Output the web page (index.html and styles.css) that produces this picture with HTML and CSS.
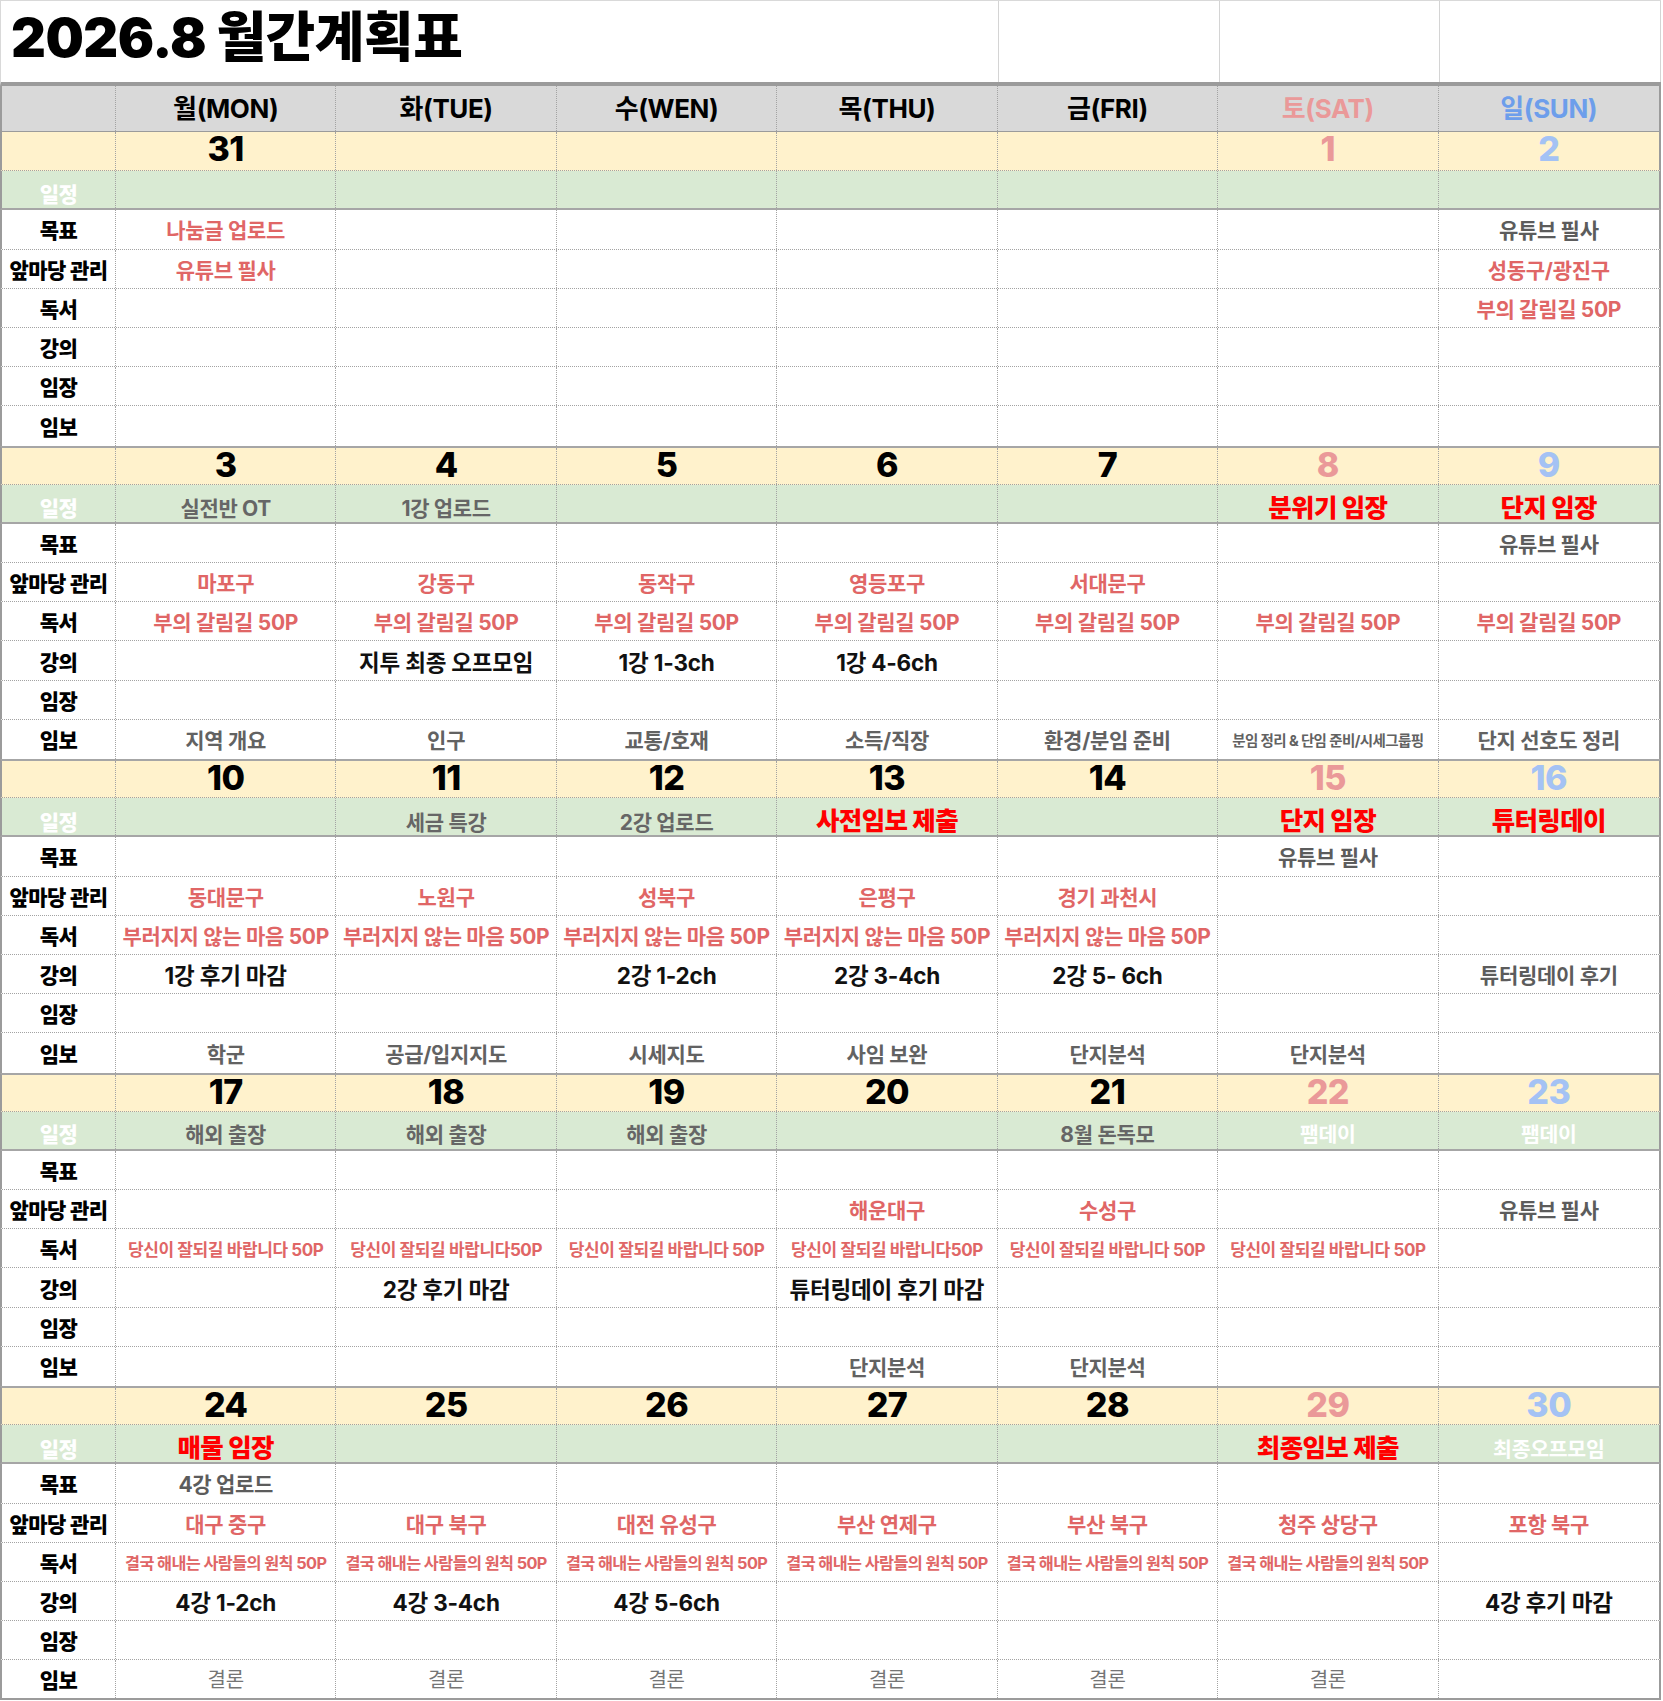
FILE: index.html
```html
<!DOCTYPE html>
<html lang="ko">
<head>
<meta charset="utf-8">
<title>2026.8 월간계획표</title>
<link rel="stylesheet" href="styles.css">
</head>
<body>
<div class="sheet">
  <div class="title-row">
    <div class="title-cell"><h1 class="title">2026.8 월간계획표</h1></div>
    <div class="title-cell"></div>
    <div class="title-cell"></div>
    <div class="title-cell"></div>
  </div>

  <div class="row head">
    <div></div><div>월(MON)</div><div>화(TUE)</div><div>수(WEN)</div><div>목(THU)</div><div>금(FRI)</div><div class="sat">토(SAT)</div><div class="sun">일(SUN)</div>
  </div>

  <!-- week 1 -->
  <div class="row date first">
    <div></div><div>31</div><div></div><div></div><div></div><div></div><div class="sat">1</div><div class="sun">2</div>
  </div>
  <div class="row sched">
    <div class="lb">일정</div><div></div><div></div><div></div><div></div><div></div><div></div><div></div>
  </div>
  <div class="row">
    <div class="lb">목표</div><div class="red">나눔글 업로드</div><div></div><div></div><div></div><div></div><div></div><div class="gray">유튜브 필사</div>
  </div>
  <div class="row">
    <div class="lb">앞마당 관리</div><div class="red">유튜브 필사</div><div></div><div></div><div></div><div></div><div></div><div class="red">성동구/광진구</div>
  </div>
  <div class="row">
    <div class="lb">독서</div><div></div><div></div><div></div><div></div><div></div><div></div><div class="red">부의 갈림길 50P</div>
  </div>
  <div class="row">
    <div class="lb">강의</div><div></div><div></div><div></div><div></div><div></div><div></div><div></div>
  </div>
  <div class="row">
    <div class="lb">임장</div><div></div><div></div><div></div><div></div><div></div><div></div><div></div>
  </div>
  <div class="row last">
    <div class="lb">임보</div><div></div><div></div><div></div><div></div><div></div><div></div><div></div>
  </div>

  <!-- week 2 -->
  <div class="row date">
    <div></div><div>3</div><div>4</div><div>5</div><div>6</div><div>7</div><div class="sat">8</div><div class="sun">9</div>
  </div>
  <div class="row sched">
    <div class="lb">일정</div><div class="gray b">실전반 OT</div><div class="gray b">1강 업로드</div><div></div><div></div><div></div><div class="hot">분위기 임장</div><div class="hot">단지 임장</div>
  </div>
  <div class="row">
    <div class="lb">목표</div><div></div><div></div><div></div><div></div><div></div><div></div><div class="gray">유튜브 필사</div>
  </div>
  <div class="row">
    <div class="lb">앞마당 관리</div><div class="red">마포구</div><div class="red">강동구</div><div class="red">동작구</div><div class="red">영등포구</div><div class="red">서대문구</div><div></div><div></div>
  </div>
  <div class="row">
    <div class="lb">독서</div><div class="red">부의 갈림길 50P</div><div class="red">부의 갈림길 50P</div><div class="red">부의 갈림길 50P</div><div class="red">부의 갈림길 50P</div><div class="red">부의 갈림길 50P</div><div class="red">부의 갈림길 50P</div><div class="red">부의 갈림길 50P</div>
  </div>
  <div class="row">
    <div class="lb">강의</div><div></div><div class="blk">지투 최종 오프모임</div><div class="blk">1강 1-3ch</div><div class="blk">1강 4-6ch</div><div></div><div></div><div></div>
  </div>
  <div class="row">
    <div class="lb">임장</div><div></div><div></div><div></div><div></div><div></div><div></div><div></div>
  </div>
  <div class="row last">
    <div class="lb">임보</div><div class="gray m">지역 개요</div><div class="gray m">인구</div><div class="gray m">교통/호재</div><div class="gray m">소득/직장</div><div class="gray m">환경/분임 준비</div><div class="gray m xs">분임 정리 &amp; 단임 준비/시세그룹핑</div><div class="gray m">단지 선호도 정리</div>
  </div>

  <!-- week 3 -->
  <div class="row date">
    <div></div><div>10</div><div>11</div><div>12</div><div>13</div><div>14</div><div class="sat">15</div><div class="sun">16</div>
  </div>
  <div class="row sched">
    <div class="lb">일정</div><div></div><div class="gray b">세금 특강</div><div class="gray b">2강 업로드</div><div class="hot">사전임보 제출</div><div></div><div class="hot">단지 임장</div><div class="hot">튜터링데이</div>
  </div>
  <div class="row">
    <div class="lb">목표</div><div></div><div></div><div></div><div></div><div></div><div class="gray">유튜브 필사</div><div></div>
  </div>
  <div class="row">
    <div class="lb">앞마당 관리</div><div class="red">동대문구</div><div class="red">노원구</div><div class="red">성북구</div><div class="red">은평구</div><div class="red">경기 과천시</div><div></div><div></div>
  </div>
  <div class="row">
    <div class="lb">독서</div><div class="red">부러지지 않는 마음 50P</div><div class="red">부러지지 않는 마음 50P</div><div class="red">부러지지 않는 마음 50P</div><div class="red">부러지지 않는 마음 50P</div><div class="red">부러지지 않는 마음 50P</div><div></div><div></div>
  </div>
  <div class="row">
    <div class="lb">강의</div><div class="blk">1강 후기 마감</div><div></div><div class="blk">2강 1-2ch</div><div class="blk">2강 3-4ch</div><div class="blk">2강 5- 6ch</div><div></div><div class="gray">튜터링데이 후기</div>
  </div>
  <div class="row">
    <div class="lb">임장</div><div></div><div></div><div></div><div></div><div></div><div></div><div></div>
  </div>
  <div class="row last">
    <div class="lb">임보</div><div class="gray m">학군</div><div class="gray m">공급/입지지도</div><div class="gray m">시세지도</div><div class="gray m">사임 보완</div><div class="gray m">단지분석</div><div class="gray m">단지분석</div><div></div>
  </div>

  <!-- week 4 -->
  <div class="row date">
    <div></div><div>17</div><div>18</div><div>19</div><div>20</div><div>21</div><div class="sat">22</div><div class="sun">23</div>
  </div>
  <div class="row sched">
    <div class="lb">일정</div><div class="gray b">해외 출장</div><div class="gray b">해외 출장</div><div class="gray b">해외 출장</div><div></div><div class="gray b">8월 돈독모</div><div class="wht">팸데이</div><div class="wht">팸데이</div>
  </div>
  <div class="row">
    <div class="lb">목표</div><div></div><div></div><div></div><div></div><div></div><div></div><div></div>
  </div>
  <div class="row">
    <div class="lb">앞마당 관리</div><div></div><div></div><div></div><div class="red">해운대구</div><div class="red">수성구</div><div></div><div class="gray">유튜브 필사</div>
  </div>
  <div class="row">
    <div class="lb">독서</div><div class="red sm">당신이 잘되길 바랍니다 50P</div><div class="red sm">당신이 잘되길 바랍니다50P</div><div class="red sm">당신이 잘되길 바랍니다 50P</div><div class="red sm">당신이 잘되길 바랍니다50P</div><div class="red sm">당신이 잘되길 바랍니다 50P</div><div class="red sm">당신이 잘되길 바랍니다 50P</div><div></div>
  </div>
  <div class="row">
    <div class="lb">강의</div><div></div><div class="blk">2강 후기 마감</div><div></div><div class="blk">튜터링데이 후기 마감</div><div></div><div></div><div></div>
  </div>
  <div class="row">
    <div class="lb">임장</div><div></div><div></div><div></div><div></div><div></div><div></div><div></div>
  </div>
  <div class="row last">
    <div class="lb">임보</div><div></div><div></div><div></div><div class="gray m">단지분석</div><div class="gray m">단지분석</div><div></div><div></div>
  </div>

  <!-- week 5 -->
  <div class="row date">
    <div></div><div>24</div><div>25</div><div>26</div><div>27</div><div>28</div><div class="sat">29</div><div class="sun">30</div>
  </div>
  <div class="row sched">
    <div class="lb">일정</div><div class="hot">매물 임장</div><div></div><div></div><div></div><div></div><div class="hot">최종임보 제출</div><div class="wht">최종오프모임</div>
  </div>
  <div class="row">
    <div class="lb">목표</div><div class="gray">4강 업로드</div><div></div><div></div><div></div><div></div><div></div><div></div>
  </div>
  <div class="row">
    <div class="lb">앞마당 관리</div><div class="red">대구 중구</div><div class="red">대구 북구</div><div class="red">대전 유성구</div><div class="red">부산 연제구</div><div class="red">부산 북구</div><div class="red">청주 상당구</div><div class="red">포항 북구</div>
  </div>
  <div class="row">
    <div class="lb">독서</div><div class="red xsm">결국 해내는 사람들의 원칙 50P</div><div class="red xsm">결국 해내는 사람들의 원칙 50P</div><div class="red xsm">결국 해내는 사람들의 원칙 50P</div><div class="red xsm">결국 해내는 사람들의 원칙 50P</div><div class="red xsm">결국 해내는 사람들의 원칙 50P</div><div class="red xsm">결국 해내는 사람들의 원칙 50P</div><div></div>
  </div>
  <div class="row">
    <div class="lb">강의</div><div class="blk">4강 1-2ch</div><div class="blk">4강 3-4ch</div><div class="blk">4강 5-6ch</div><div></div><div></div><div></div><div class="blk">4강 후기 마감</div>
  </div>
  <div class="row">
    <div class="lb">임장</div><div></div><div></div><div></div><div></div><div></div><div></div><div></div>
  </div>
  <div class="row last end">
    <div class="lb">임보</div><div class="soft">결론</div><div class="soft">결론</div><div class="soft">결론</div><div class="soft">결론</div><div class="soft">결론</div><div class="soft">결론</div><div></div>
  </div>
</div>
</body>
</html>
```

FILE: styles.css
```css
html, body {
  margin: 0;
  padding: 0;
  background: #ffffff;
}

body {
  font-family: Inter, "Noto Sans CJK KR", "Noto Sans", sans-serif;
  color: #000;
}

.sheet {
  width: 1661px;
}

/* title */
.title-row {
  display: grid;
  grid-template-columns: 998px repeat(3, 1fr);
  height: 86px;
  box-sizing: border-box;
  border-top: 1px solid #d9d9d9;
  border-left: 1px solid #d9d9d9;
  border-bottom: 4px solid #9b9b9b;
}

.title-cell {
  border-right: 1px solid #d4d4d4;
  display: flex;
  align-items: center;
  padding-bottom: 8px;
}

.title {
  margin: 0 0 0 10px;
  font-size: 54px;
  font-weight: 900;
  letter-spacing: -0.5px;
  line-height: 1;
  color: #000;
}

/* grid rows */
.row {
  display: grid;
  grid-template-columns: 114px repeat(7, 1fr);
  height: 39.2px;
  box-sizing: border-box;
  border-left: 2px solid #9b9b9b;
  border-right: 2px solid #9b9b9b;
  border-bottom: 1px dotted #a3a3a3;
}

.row > div {
  display: flex;
  align-items: center;
  justify-content: center;
  white-space: nowrap;
  border-right: 1px dotted #a3a3a3;
  font-size: 21px;
  font-weight: 700;
  letter-spacing: -0.3px;
  min-width: 0;
}

.row > div:last-child {
  border-right: none;
}

.row.head {
  height: 46px;
  background: #d9d9d9;
  border-bottom: 1px solid #9b9b9b;
}

.row.head > div {
  font-size: 26px;
  font-weight: 700;
  letter-spacing: -0.4px;
  color: #000;
  padding-bottom: 4px;
}

.row.head > .sat { color: #ea9999; }
.row.head > .sun { color: #6d9eeb; }

.row.date {
  background: #fff2cc;
  border-top: 2px solid #a6a6a6;
}

.row.date.first {
  border-top: none;
}

.row.date > div {
  font-size: 34px;
  font-weight: 800;
  letter-spacing: -0.5px;
  line-height: 1;
  color: #000;
  padding-bottom: 10px;
}

.row.date > .sat { color: #ea9999; }
.row.date > .sun { color: #a4c2f4; }

.row.sched {
  background: #d9ead3;
  border-bottom: 2px solid #a6a6a6;
}

.row.sched > div {
  padding-top: 6px;
}

.row.sched > .hot {
  padding-top: 2px;
}

.row.last {
  border-bottom: none;
}

.row.end {
  border-bottom: 2px solid #9b9b9b;
}

/* label column */
.row > .lb {
  font-size: 21px;
  font-weight: 800;
  letter-spacing: -0.5px;
  color: #000;
}

.row.sched > .lb {
  color: #ffffff;
}

/* text styles */
.row > .red {
  color: #e06666;
  font-weight: 700;
}

.row > .gray {
  color: #5c5c5c;
  font-weight: 700;
}

.row > .gray.m {
  font-weight: 700;
  color: #626262;
}

.row > .gray.b {
  color: #666666;
  font-weight: 700;
}

.row > .blk {
  color: #111111;
  font-weight: 700;
  font-size: 22.5px;
  letter-spacing: -0.2px;
}

.row > .hot {
  color: #ff0000;
  font-weight: 800;
  font-size: 25.5px;
  letter-spacing: -0.6px;
}

.row > .wht {
  color: #ffffff;
  font-weight: 700;
  font-size: 20.5px;
}

.row > .soft {
  color: #757575;
  font-weight: 400;
  font-size: 20px;
}

.row > .sm {
  font-size: 17px;
  letter-spacing: -0.4px;
}

.row > .xsm {
  font-size: 16.3px;
  letter-spacing: -0.6px;
}

.row > .xs {
  font-size: 14.5px;
  letter-spacing: -0.6px;
}
```
